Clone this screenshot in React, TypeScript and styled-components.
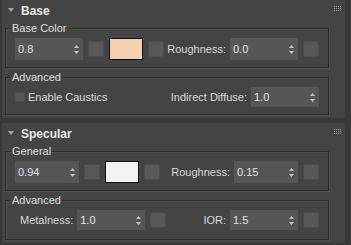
import React, { ReactElement } from 'react';
import styled, { createGlobalStyle } from 'styled-components';

const GlobalStyle = createGlobalStyle`
  body {
    margin: 0;
    background-color: #383838;
    font-family: 'Liberation Sans', Arial, sans-serif;
    font-size: 11px;
    color: #d9d9d9;
  }
`;

const Frame = styled.div`
  width: 351px;
  height: 245px;
  overflow: hidden;
  box-sizing: border-box;
  padding: 0 6px 0 2px;
  background-color: #383838;
  display: flex;
  flex-direction: column;
  gap: 5px;
`;

const Panel = styled.section`
  background-color: #444444;
  display: flex;
  flex-direction: column;
`;

const Header = styled.div`
  height: 22px;
  display: flex;
  align-items: center;
  padding: 0 4px 0 6px;
`;

const Arrow = styled.span`
  width: 0;
  height: 0;
  border-left: 3px solid transparent;
  border-right: 3px solid transparent;
  border-top: 4px solid #a3a3a3;
  margin-right: 7px;
  margin-top: -2px;
`;

const Title = styled.span`
  font-size: 12px;
  font-weight: bold;
  color: #e8e8e8;
`;

const Grip = styled.svg`
  margin-left: auto;
  align-self: flex-start;
  margin-top: 6px;
`;

const Body = styled.div`
  display: flex;
  flex-direction: column;
  gap: 3px;
  padding: 0 16px 3px 3px;
`;

const Group = styled.fieldset<{ $bottom?: number }>`
  margin: 0;
  padding: 3px 9px ${({ $bottom }) => $bottom ?? 7}px 9px;
  border: 1px solid #2d2d2d;
  box-shadow: inset 1px 1px 0 #505050, 1px 1px 0 #505050;
  min-width: 0;
`;

const Legend = styled.legend`
  padding: 0 1px;
  margin-left: -4px;
  line-height: 13px;
  font-size: 11px;
  color: #dedede;
`;

const Row = styled.div`
  display: flex;
  align-items: center;
  justify-content: space-between;
`;

const Cluster = styled.div<{ $indent?: number }>`
  display: flex;
  align-items: center;
  gap: 5px;
  padding-left: ${({ $indent }) => $indent ?? 0}px;
`;

const Label = styled.span`
  color: #d9d9d9;
  white-space: nowrap;
  margin-right: -1px;
`;

const SpinnerBox = styled.div<{ $w: number; $h: number }>`
  width: ${({ $w }) => $w}px;
  height: ${({ $h }) => $h}px;
  box-sizing: border-box;
  background-color: #565656;
  display: flex;
  align-items: center;
  justify-content: space-between;
  padding: 0 4px 0 3px;
  color: #e2e2e2;
`;

const SmallButton = styled.div`
  width: 16px;
  height: 16px;
  box-sizing: border-box;
  border-radius: 2px;
  background-color: #585858;
  border: 1px solid #4c4c4c;
`;

const Swatch = styled.div<{ $color: string }>`
  width: 34px;
  height: 22px;
  box-sizing: border-box;
  border: 1px solid #111111;
  background-color: ${({ $color }) => $color};
`;

const Check = styled.div`
  width: 10px;
  height: 10px;
  box-sizing: border-box;
  background-color: #585858;
  border: 1px solid #4e4e4e;
  margin-right: -2px;
`;

const Spinner = ({ value, w = 68, h = 22 }: { value: string; w?: number; h?: number }): ReactElement => (
  <SpinnerBox $w={w} $h={h}>
    <span>{value}</span>
    <svg width="5" height="9" viewBox="0 0 5 9">
      <path d="M2.5 0 L5 3 L0 3 Z" fill="#c4c4c4" />
      <path d="M0 6 L5 6 L2.5 9 Z" fill="#c4c4c4" />
    </svg>
  </SpinnerBox>
);

const GripDots = (): ReactElement => (
  <Grip width="7" height="5" viewBox="0 0 7 5">
    {[0, 2, 4].map((y) =>
      [0, 2, 4, 6].map((x) => <rect key={`${x}-${y}`} x={x} y={y} width="1" height="1" fill="#9c9c9c" />)
    )}
  </Grip>
);

const PanelHeader = ({ title }: { title: string }): ReactElement => (
  <Header>
    <Arrow />
    <Title>{title}</Title>
    <GripDots />
  </Header>
);

const App = (): ReactElement => {
  return (
    <React.Fragment>
      <GlobalStyle />
      <Frame>
        <Panel>
          <PanelHeader title="Base" />
          <Body>
            <Group>
              <Legend>Base Color</Legend>
              <Row>
                <Cluster>
                  <Spinner value="0.8" />
                  <SmallButton />
                  <Swatch $color="#f4d0b0" />
                  <SmallButton />
                </Cluster>
                <Cluster>
                  <Label>Roughness:</Label>
                  <Spinner value="0.0" />
                  <SmallButton />
                </Cluster>
              </Row>
            </Group>
            <Group>
              <Legend>Advanced</Legend>
              <Row>
                <Cluster>
                  <Check />
                  <Label>Enable Caustics</Label>
                </Cluster>
                <Cluster>
                  <Label>Indirect Diffuse:</Label>
                  <Spinner value="1.0" h={20} />
                </Cluster>
              </Row>
            </Group>
          </Body>
        </Panel>
        <Panel>
          <PanelHeader title="Specular" />
          <Body>
            <Group>
              <Legend>General</Legend>
              <Row>
                <Cluster>
                  <Spinner value="0.94" w={64} />
                  <SmallButton />
                  <Swatch $color="#f3f3f3" />
                  <SmallButton />
                </Cluster>
                <Cluster>
                  <Label>Roughness:</Label>
                  <Spinner value="0.15" w={64} />
                  <SmallButton />
                </Cluster>
              </Row>
            </Group>
            <Group $bottom={9}>
              <Legend>Advanced</Legend>
              <Row>
                <Cluster $indent={5}>
                  <Label>Metalness:</Label>
                  <Spinner value="1.0" h={20} />
                  <SmallButton />
                </Cluster>
                <Cluster>
                  <Label>IOR:</Label>
                  <Spinner value="1.5" h={20} />
                  <SmallButton />
                </Cluster>
              </Row>
            </Group>
          </Body>
        </Panel>
      </Frame>
    </React.Fragment>
  );
};

export default App;
